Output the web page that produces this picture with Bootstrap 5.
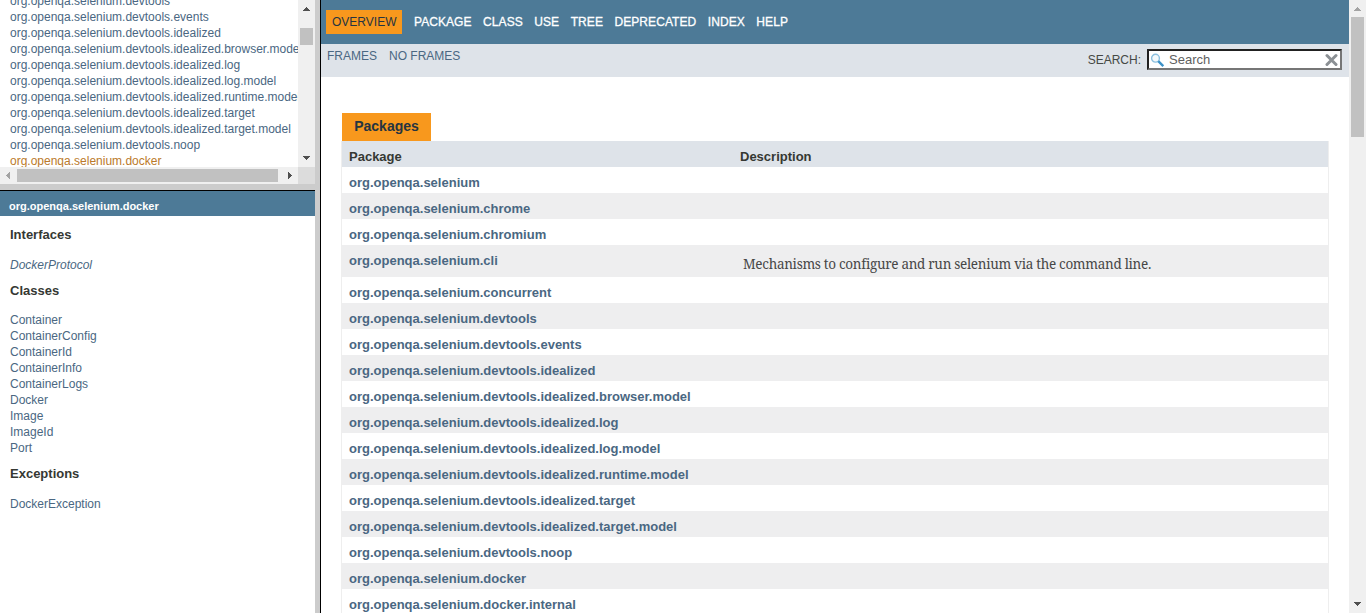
<!DOCTYPE html>
<html lang="en">
<head>
<meta charset="utf-8">
<title>Overview</title>
<link href="https://cdn.jsdelivr.net/npm/bootstrap@5.3.0/dist/css/bootstrap.min.css" rel="stylesheet">
<style>
body{font-family:"Liberation Sans",Arial,sans-serif;color:#353833;font-size:12px;line-height:16px;background:#fff}
a{color:#4a6782;text-decoration:none}
.side{width:315px}
.split-v{width:6px;background:#ccc;border-right:1px solid #000}
.split-h{height:7px;width:320px;background:#ccc;border-bottom:1px solid #000}
.pkg-pane{height:167px}
.pkg-list{margin-top:-7px;padding-left:10px;white-space:nowrap}
.pkg-list .current{color:#bb7a2a}
.track{background:#f0f0f0;width:17px}
.hscroll{height:17px;background:#f0f0f0}
.corner{width:17px;height:17px;background:#dcdcdc}
.cls-title{height:25px;background:#4d7a97;color:#fff;font-size:11px;font-weight:700;padding:7px 9px 0;line-height:16px}
.cls{padding:11px 10px}
.cls h3{font-size:13px;font-weight:700;line-height:16px;margin:0}
.cls-list{padding:14px 0 10px}
.cls-list.tight{padding-top:13px}
.top-nav{height:44px;background:#4d7a97;padding:10px 5px;gap:11.5px}
.top-nav a{color:#fff;line-height:24px;letter-spacing:.07px;-webkit-text-stroke:.3px #fff}
.top-nav .active{background:#f8981d;color:#253441;padding:0 6px;letter-spacing:0;-webkit-text-stroke:0}
.sub-nav{height:33px;background:#dee3e9;padding-left:6px;padding-right:7px}
.sub-nav a{margin:4px 12px 0 0}
.find-label{margin:8px 6px 0 0;color:#454845}
.find{width:195px;height:21px;margin-top:5px;padding-right:1px;background:#fff;border:2px solid;border-color:#212121 #767676 #767676 #212121;color:#606060;font-size:13px}
.content{padding:36px 20px 0}
.caption-tab{background:#f8981d;color:#253441;font-size:14px;font-weight:700;width:89px;height:28px;line-height:27px;margin-left:1px}
.pkg-table{border:solid #eee;border-width:0 1px;font-size:13px;font-weight:700}
.pkg-row{height:26px;padding:0 7px;line-height:31px}
.pkg-row:nth-child(odd){background:#eeeeef}
.pkg-row.head-row{background:#dee3e9}
.pkg-row.tall{height:32px}
.c1{width:391px}
.desc{font:400 13.5px/38px "Droid Serif","Noto Serif","Liberation Serif",serif;letter-spacing:-.3px;color:#474747;padding-left:3px;white-space:nowrap}
</style>
</head>
<body class="vh-100 overflow-hidden d-flex">
<aside class="d-flex flex-column flex-shrink-0 side">
  <div class="d-flex pkg-pane">
    <div class="flex-grow-1 overflow-hidden">
      <div class="pkg-list d-flex flex-column">
        <a href="#">org.openqa.selenium.devtools</a>
        <a href="#">org.openqa.selenium.devtools.events</a>
        <a href="#">org.openqa.selenium.devtools.idealized</a>
        <a href="#">org.openqa.selenium.devtools.idealized.browser.model</a>
        <a href="#">org.openqa.selenium.devtools.idealized.log</a>
        <a href="#">org.openqa.selenium.devtools.idealized.log.model</a>
        <a href="#">org.openqa.selenium.devtools.idealized.runtime.model</a>
        <a href="#">org.openqa.selenium.devtools.idealized.target</a>
        <a href="#">org.openqa.selenium.devtools.idealized.target.model</a>
        <a href="#">org.openqa.selenium.devtools.noop</a>
        <a href="#" class="current">org.openqa.selenium.docker</a>
      </div>
    </div>
    <svg class="track flex-shrink-0" width="17" height="167" shape-rendering="crispEdges"><path fill="#505050" d="M8 7h1v1h1v1h1v1h1v1H5v-1h1V9h1V8h1zM5 156h7v1h-1v1h-1v1H9v1H8v-1H7v-1H6v-1H5z"/><path fill="#c1c1c1" d="M2 28h13v17H2z"/></svg>
  </div>
  <div class="d-flex">
    <svg class="hscroll" width="298" height="17" shape-rendering="crispEdges"><path fill="#a3a3a3" d="M10 5v7H9v-1H8v-1H7V9H6V8h1V7h1V6h1V5z"/><path fill="#c1c1c1" d="M17 2h261v13H17z"/><path fill="#505050" d="M288 5v7h1v-1h1v-1h1V9h1V8h-1V7h-1V6h-1V5z"/></svg>
    <div class="corner"></div>
  </div>
  <div class="split-h"></div>
  <div class="cls-title">org.openqa.selenium.docker</div>
  <div class="cls">
    <h3>Interfaces</h3>
    <div class="cls-list d-flex flex-column"><a href="#" class="fst-italic">DockerProtocol</a></div>
    <h3>Classes</h3>
    <div class="cls-list tight d-flex flex-column">
      <a href="#">Container</a><a href="#">ContainerConfig</a><a href="#">ContainerId</a><a href="#">ContainerInfo</a><a href="#">ContainerLogs</a><a href="#">Docker</a><a href="#">Image</a><a href="#">ImageId</a><a href="#">Port</a>
    </div>
    <h3>Exceptions</h3>
    <div class="cls-list d-flex flex-column"><a href="#">DockerException</a></div>
  </div>
</aside>
<div class="split-v flex-shrink-0"></div>
<main class="flex-grow-1 overflow-hidden">
  <nav class="top-nav d-flex">
    <a href="#" class="active">OVERVIEW</a><a href="#">PACKAGE</a><a href="#">CLASS</a><a href="#">USE</a><a href="#">TREE</a><a href="#">DEPRECATED</a><a href="#">INDEX</a><a href="#">HELP</a>
  </nav>
  <div class="sub-nav d-flex">
    <a href="#">FRAMES</a><a href="#">NO FRAMES</a>
    <span class="ms-auto find-label">SEARCH:</span>
    <div class="find d-flex align-items-center">
      <svg width="16" height="16" viewBox="0 0 16 16" class="me-1"><circle cx="6.5" cy="6.2" r="3.9" fill="#f4fafd" stroke="#8cc0df" stroke-width="1.4"/><path d="M9.3 9.2l5 5" stroke="#3c92c8" stroke-width="2.4"/></svg>
      <span>Search</span>
      <svg width="14" height="14" viewBox="0 0 14 14" class="ms-auto me-0"><path d="M2 2.5l9 9m0-9l-9 9" stroke="#8b9094" stroke-width="3" stroke-linecap="round"/></svg>
    </div>
  </div>
  <div class="content">
    <div class="caption-tab text-center">Packages</div>
    <div class="pkg-table">
      <div class="pkg-row head-row d-flex"><div class="c1">Package</div><div>Description</div></div>
      <div class="pkg-row"><a href="#">org.openqa.selenium</a></div>
      <div class="pkg-row"><a href="#">org.openqa.selenium.chrome</a></div>
      <div class="pkg-row"><a href="#">org.openqa.selenium.chromium</a></div>
      <div class="pkg-row tall d-flex"><a href="#" class="c1">org.openqa.selenium.cli</a><div class="desc">Mechanisms to configure and run selenium via the command line.</div></div>
      <div class="pkg-row"><a href="#">org.openqa.selenium.concurrent</a></div>
      <div class="pkg-row"><a href="#">org.openqa.selenium.devtools</a></div>
      <div class="pkg-row"><a href="#">org.openqa.selenium.devtools.events</a></div>
      <div class="pkg-row"><a href="#">org.openqa.selenium.devtools.idealized</a></div>
      <div class="pkg-row"><a href="#">org.openqa.selenium.devtools.idealized.browser.model</a></div>
      <div class="pkg-row"><a href="#">org.openqa.selenium.devtools.idealized.log</a></div>
      <div class="pkg-row"><a href="#">org.openqa.selenium.devtools.idealized.log.model</a></div>
      <div class="pkg-row"><a href="#">org.openqa.selenium.devtools.idealized.runtime.model</a></div>
      <div class="pkg-row"><a href="#">org.openqa.selenium.devtools.idealized.target</a></div>
      <div class="pkg-row"><a href="#">org.openqa.selenium.devtools.idealized.target.model</a></div>
      <div class="pkg-row"><a href="#">org.openqa.selenium.devtools.noop</a></div>
      <div class="pkg-row"><a href="#">org.openqa.selenium.docker</a></div>
      <div class="pkg-row"><a href="#">org.openqa.selenium.docker.internal</a></div>
    </div>
  </div>
</main>
<svg class="track flex-shrink-0" width="17" height="613" shape-rendering="crispEdges"><path fill="#a3a3a3" d="M8 7h1v1h1v1h1v1h1v1H5v-1h1V9h1V8h1z"/><path fill="#505050" d="M5 602h7v1h-1v1h-1v1H9v1H8v-1H7v-1H6v-1H5z"/><path fill="#c1c1c1" d="M2 17h13v120H2z"/></svg>
<script src="https://cdn.jsdelivr.net/npm/bootstrap@5.3.0/dist/js/bootstrap.bundle.min.js"></script>
</body>
</html>
